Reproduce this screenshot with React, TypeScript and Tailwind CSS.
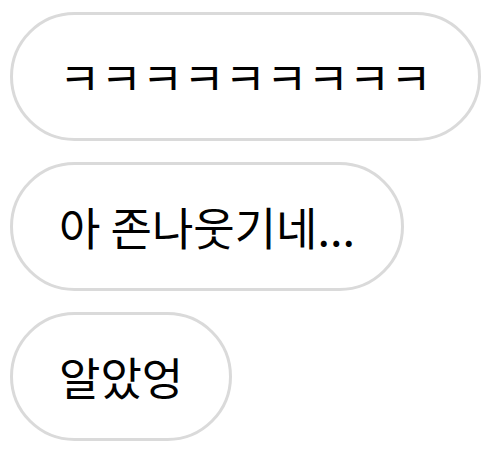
import React from 'react';

const messages = ['ㅋㅋㅋㅋㅋㅋㅋㅋㅋ', '아 존나웃기네...', '알았엉'];

const Bubble: React.FC<{ text: string }> = ({ text }) => (
    <div className="flex h-[129px] items-center rounded-full border-[3px] border-[#dadada] bg-white px-[46px]">
        <span className="whitespace-nowrap text-[45px] leading-none text-black">{text}</span>
    </div>
);

const App: React.FC = () => {
    return (
        <div
            className="flex min-h-[450px] w-[484px] flex-col items-start gap-[21px] bg-white pl-[10px] pt-[12px]"
            style={{ fontFamily: '"Noto Sans CJK KR", "Noto Sans", sans-serif' }}
        >
            {messages.map((m) => (
                <Bubble key={m} text={m} />
            ))}
        </div>
    );
};

export default App;
